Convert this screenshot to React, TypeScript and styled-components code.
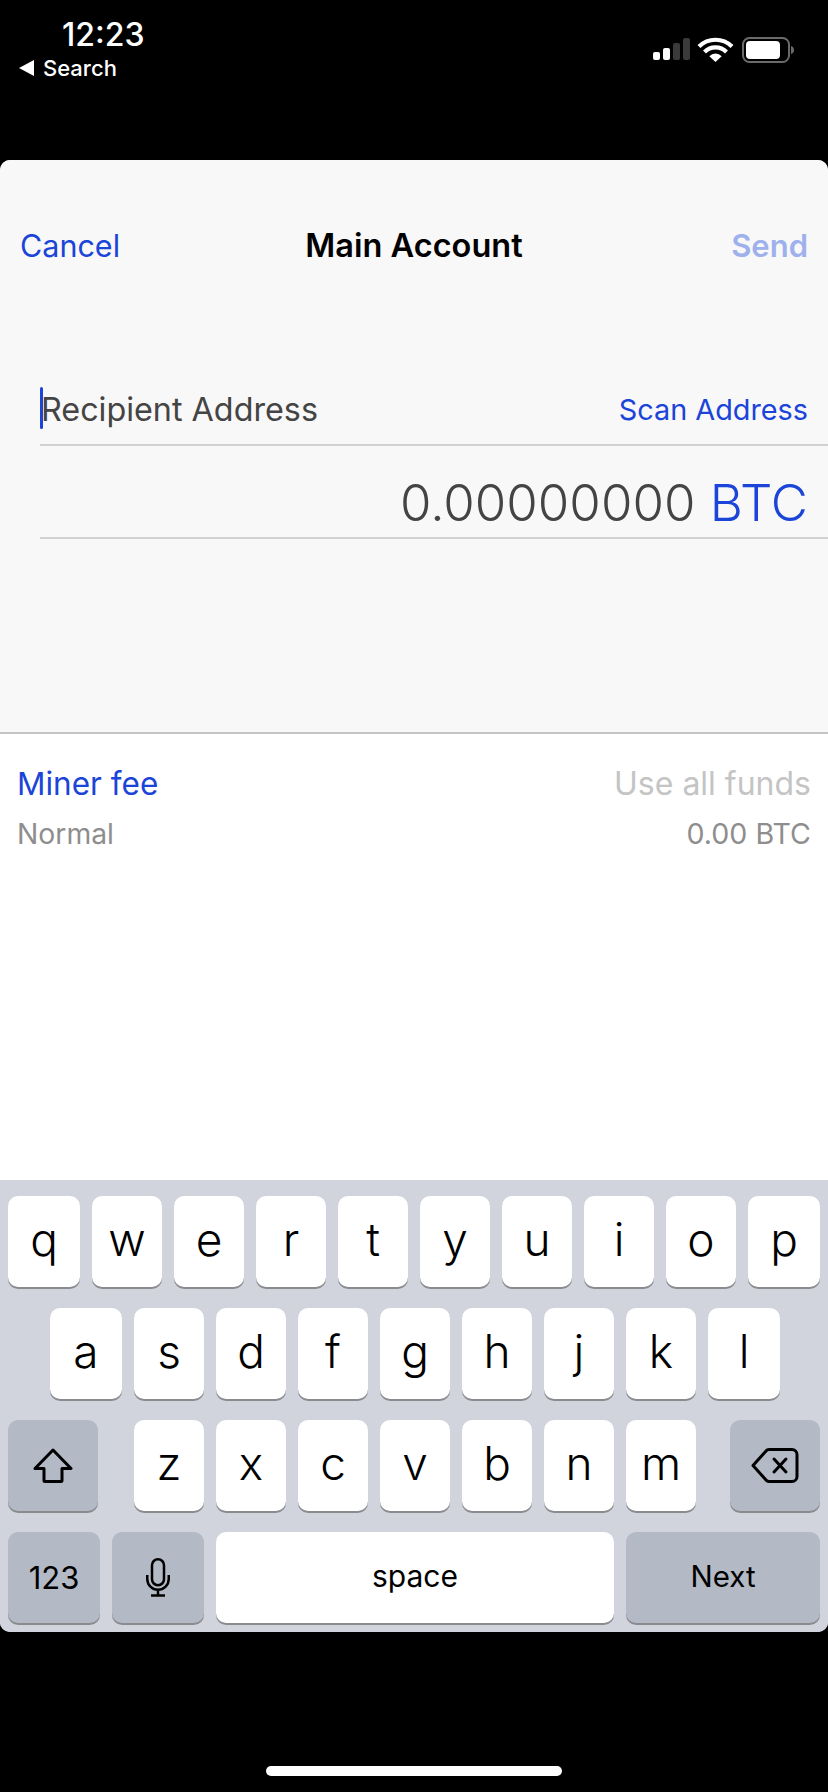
import styled, { createGlobalStyle } from 'styled-components';

const GlobalStyle = createGlobalStyle`
  html, body {
    margin: 0;
    padding: 0;
    background: #000;
  }
  * {
    box-sizing: border-box;
  }
`;

const BLUE = '#1b44d8';

const Page = styled.div`
  width: 828px;
  height: 1792px;
  background: #000;
  font-family: Inter, "Liberation Sans", sans-serif;
  display: flex;
  flex-direction: column;
`;

const StatusBar = styled.div`
  height: 160px;
  color: #fff;
  display: flex;
  justify-content: space-between;
  align-items: flex-start;
`;

const StatusLeft = styled.div`
  padding: 17px 0 0 19px;
`;

const Clock = styled.div`
  font-size: 32px;
  font-weight: 500;
  line-height: 36px;
  margin-left: 43px;
`;

const BackLink = styled.div`
  display: flex;
  align-items: center;
  gap: 9px;
  font-size: 22px;
  font-weight: 500;
  line-height: 28px;
  margin-top: 1px;
`;

const StatusIcons = styled.svg`
  margin: 36px 32px 0 0;
`;

const Sheet = styled.div`
  height: 1472px;
  border-radius: 10px;
  overflow: hidden;
  display: flex;
  flex-direction: column;
  background: #fff;
`;

const TopPane = styled.div`
  height: 574px;
  background: #f8f8f8;
  border-bottom: 2px solid #c4c4c4;
`;

const NavBar = styled.div`
  height: 170px;
  padding: 0 20px;
  display: flex;
  align-items: center;
  justify-content: space-between;
`;

const NavAction = styled.div<{ $muted?: boolean; $strong?: boolean }>`
  width: 120px;
  font-size: ${(p) => (p.$strong ? 31 : 30.5)}px;
  font-weight: ${(p) => (p.$strong ? 600 : 400)};
  color: ${(p) => (p.$muted ? '#9eb1ec' : BLUE)};
  text-align: ${(p) => (p.$strong ? 'right' : 'left')};
`;

const NavTitle = styled.div`
  font-size: 32.5px;
  font-weight: 600;
  color: #000;
`;

const Fields = styled.div`
  margin: 40px 0 0 40px;
`;

const FieldRow = styled.div<{ $height: number; $top: number }>`
  position: relative;
  height: ${(p) => p.$height}px;
  padding: ${(p) => p.$top}px 20px 0 0;
  border-bottom: 2px solid #d2d2d2;
  display: flex;
  justify-content: space-between;
  align-items: center;
`;

const Caret = styled.div`
  position: absolute;
  left: 0;
  top: 17px;
  width: 3px;
  height: 42px;
  border-radius: 2px;
  background: ${BLUE};
`;

const Placeholder = styled.div`
  font-size: 32.3px;
  color: #444;
  margin-left: 1px;
`;

const ScanLink = styled.div`
  font-size: 28.8px;
  color: ${BLUE};
`;

const Amount = styled.div`
  margin-left: auto;
  font-size: 51px;
  font-weight: 300;
  color: #444;
`;

const AmountUnit = styled.span`
  color: ${BLUE};
`;

const FeePane = styled.div`
  flex: 1;
  padding: 31px 17px 0;
  background: #fff;
`;

const FeeRow = styled.div<{ $gap?: number }>`
  display: flex;
  justify-content: space-between;
  align-items: center;
  margin-top: ${(p) => p.$gap ?? 0}px;
`;

const FeeLabel = styled.div<{ $color: string; $size: number }>`
  font-size: ${(p) => p.$size}px;
  line-height: 38px;
  color: ${(p) => p.$color};
`;

const Keyboard = styled.div`
  height: 452px;
  padding-top: 16px;
  background: #d1d4dc;
  display: flex;
  flex-direction: column;
  gap: 21px;
`;

const KeyRow = styled.div<{ $inset?: number }>`
  display: flex;
  gap: 12px;
  padding: 0 8px 0 ${(p) => p.$inset ?? 8}px;
`;

const Key = styled.div<{ $width: number; $dark?: boolean; $size?: number; $before?: number; $after?: number; $lift?: number }>`
  width: ${(p) => p.$width}px;
  height: 91px;
  margin-left: ${(p) => p.$before ?? 0}px;
  margin-right: ${(p) => p.$after ?? 0}px;
  padding-bottom: ${(p) => p.$lift ?? 0}px;
  flex-shrink: 0;
  border-radius: 10px;
  background: ${(p) => (p.$dark ? '#b3b9c5' : '#fff')};
  box-shadow: 0 2px 0 #8a8b8f;
  color: #000;
  font-size: ${(p) => p.$size ?? 46}px;
  font-weight: ${(p) => (p.$size ? 400 : 350)};
  display: flex;
  align-items: center;
  justify-content: center;
`;

const HomeBar = styled.div`
  width: 296px;
  height: 10px;
  margin: 134px auto 0;
  border-radius: 5px;
  background: #fff;
`;

const TOP_ROW = ['q', 'w', 'e', 'r', 't', 'y', 'u', 'i', 'o', 'p'];
const MIDDLE_ROW = ['a', 's', 'd', 'f', 'g', 'h', 'j', 'k', 'l'];
const BOTTOM_ROW = ['z', 'x', 'c', 'v', 'b', 'n', 'm'];

export default function App() {
  return (
    <Page>
      <GlobalStyle />
      <StatusBar>
        <StatusLeft>
          <Clock>12:23</Clock>
          <BackLink>
            <svg width="15" height="16" viewBox="0 0 15 16">
              <path d="M15 0v16L0 8z" fill="#fff" />
            </svg>
            Search
          </BackLink>
        </StatusLeft>
        <StatusIcons width="143" height="28" viewBox="653 36 143 28">
          <rect x="653" y="52" width="7" height="8" rx="2" fill="#fff" />
          <rect x="663" y="48" width="7" height="12" rx="2" fill="#fff" />
          <rect x="673" y="43" width="7" height="17" rx="2" fill="#3a3a3a" />
          <rect x="683" y="38" width="7" height="22" rx="2" fill="#3a3a3a" />
          <path
            d="M699 46.5a23.5 23.5 0 0 1 33 0M704.5 52a15.6 15.6 0 0 1 22 0"
            fill="none"
            stroke="#fff"
            strokeWidth="4.2"
          />
          <path d="M709.3 56.2a8.6 8.6 0 0 1 12.4 0l-6.2 5.8z" fill="#fff" />
          <rect x="743" y="38" width="46" height="24" rx="6.5" fill="none" stroke="#6a6a6a" strokeWidth="2" />
          <rect x="746" y="41" width="34" height="18" rx="4" fill="#fff" />
          <path d="M791 46c2 .4 3 2 3 4s-1 3.600-3 4z" fill="#6a6a6a" />
        </StatusIcons>
      </StatusBar>

      <Sheet>
        <TopPane>
          <NavBar>
            <NavAction>Cancel</NavAction>
            <NavTitle>Main Account</NavTitle>
            <NavAction $muted $strong>Send</NavAction>
          </NavBar>
          <Fields>
            <FieldRow $height={76} $top={4}>
              <Caret />
              <Placeholder>Recipient Address</Placeholder>
              <ScanLink>Scan Address</ScanLink>
            </FieldRow>
            <FieldRow $height={93} $top={21}>
              <Amount>
                0.00000000 <AmountUnit>BTC</AmountUnit>
              </Amount>
            </FieldRow>
          </Fields>
        </TopPane>

        <FeePane>
          <FeeRow>
            <FeeLabel $color={BLUE} $size={31.5}>Miner fee</FeeLabel>
            <FeeLabel $color="#c4c4c4" $size={32}>Use all funds</FeeLabel>
          </FeeRow>
          <FeeRow $gap={12}>
            <FeeLabel $color="#8e8e8e" $size={28.3}>Normal</FeeLabel>
            <FeeLabel $color="#8e8e8e" $size={28.6}>0.00 BTC</FeeLabel>
          </FeeRow>
        </FeePane>

        <Keyboard>
          <KeyRow>
            {TOP_ROW.map((k, i) => (
              <Key key={k} $width={i === 0 || i === 9 ? 72 : 70} $lift={6}>{k}</Key>
            ))}
          </KeyRow>
          <KeyRow $inset={50}>
            {MIDDLE_ROW.map((k, i) => (
              <Key key={k} $width={i === 0 || i === 8 ? 72 : 70} $lift={6}>{k}</Key>
            ))}
          </KeyRow>
          <KeyRow>
            <Key $width={90} $dark $after={24}>
              <svg width="40" height="35" viewBox="0 0 40 35" fill="none" stroke="#000" strokeWidth="3" strokeLinejoin="round">
                <path d="M20 2 38 20.500H29V32.500a1 1 0 0 1-1 1H12a1 1 0 0 1-1-1V20.500H2z" />
              </svg>
            </Key>
            {BOTTOM_ROW.map((k) => (
              <Key key={k} $width={70} $lift={6}>{k}</Key>
            ))}
            <Key $width={90} $dark $before={22}>
              <svg width="48" height="35" viewBox="0 0 48 35" fill="none" stroke="#000" strokeWidth="3" strokeLinejoin="round" strokeLinecap="round">
                <path d="M2 17.500 15 3a4 4 0 0 1 3-1.500H41a5 5 0 0 1 5 5V28.500a5 5 0 0 1-5 5H18a4 4 0 0 1-3-1.500z" />
                <path d="M23 11 35 24M35 11 23 24" />
              </svg>
            </Key>
          </KeyRow>
          <KeyRow>
            <Key $width={92} $dark $size={31}>123</Key>
            <Key $width={92} $dark>
              <svg width="24" height="39" viewBox="0 0 24 39" fill="none" stroke="#000" strokeWidth="2.500">
                <rect x="6" y="1.250" width="12" height="26" rx="6" />
                <path d="M1.250 17v4a10.750 10.750 0 0 0 21.500 0v-4M12 32v5M5 37.500h14" />
              </svg>
            </Key>
            <Key $width={398} $size={30} $lift={4}>space</Key>
            <Key $width={194} $dark $size={29.5} $lift={3}>Next</Key>
          </KeyRow>
        </Keyboard>
      </Sheet>

      <HomeBar />
    </Page>
  );
}
